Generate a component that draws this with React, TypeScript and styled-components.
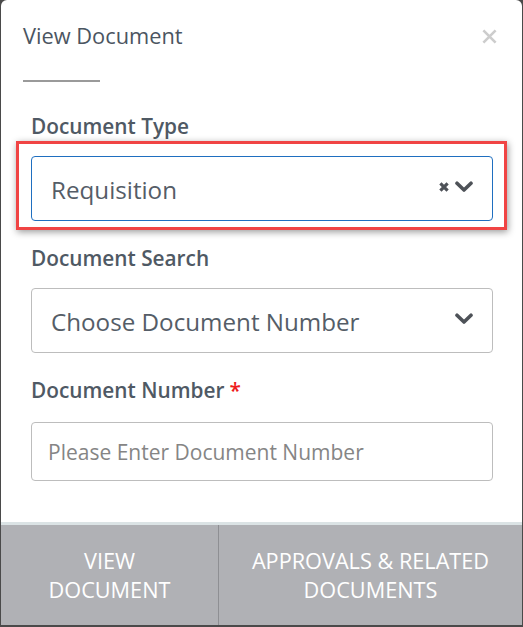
import React from "react";
import styled, { createGlobalStyle } from "styled-components";

const Global = createGlobalStyle`
  html, body { margin: 0; padding: 0; background: #4a4a4a; }
  body { font-family: "Open Sans", "Noto Sans", sans-serif; }
  * { box-sizing: border-box; }
`;

const Modal = styled.div`
  margin-left: 1px;
  width: 521px;
  height: 625px;
  background: #fff;
  border-radius: 6px 6px 0 0;
  display: flex;
  flex-direction: column;
  overflow: hidden;
`;

const Header = styled.div`
  display: flex;
  justify-content: space-between;
  align-items: flex-start;
  padding: 21px 24px 0 22px;
  height: 50px;
`;

const Title = styled.h2`
  margin: 0;
  font-size: 21.8px;
  line-height: 29px;
  font-weight: 400;
  color: #4b5561;
`;

const Close = styled.button`
  border: 0;
  background: none;
  padding: 0;
  margin-top: 7px;
  color: #cdcdcd;
  cursor: pointer;
  display: flex;
`;

const Rule = styled.div`
  margin: 30px 0 0 22px;
  width: 77px;
  height: 2px;
  background: #9a9a9a;
`;

const Body = styled.div`
  padding: 30px 29px 0 30px;
  display: flex;
  flex-direction: column;
  flex: 1;
`;

const Field = styled.div<{ $gap?: number }>`
  display: flex;
  flex-direction: column;
  margin-bottom: ${(p) => p.$gap ?? 0}px;
`;

const Label = styled.label<{ $space: number }>`
  font-size: 20.8px;
  line-height: 28px;
  font-weight: 600;
  color: #4f5964;
  margin-bottom: ${(p) => p.$space}px;
`;

const Req = styled.span`
  color: #ee1c1c;
  margin-left: 5px;
`;

const SelectWrap = styled.div`
  position: relative;
`;

const Select = styled.div<{ $active?: boolean }>`
  height: 65px;
  border: 1px solid ${(p) => (p.$active ? "#1f6fc0" : "#bdbdbd")};
  border-radius: 4px;
  display: flex;
  align-items: center;
  padding: 2px 19px 0 19px;
  font-size: 24.2px;
  color: #555d67;
  background: #fff;
`;

const SelectText = styled.span`
  flex: 1;
`;

const Icons = styled.span`
  display: flex;
  align-items: center;
  gap: 6px;
  color: #4e5258;
  margin-top: -5px;
`;

const Input = styled.input`
  height: 59px;
  border: 1px solid #bdbdbd;
  border-radius: 4px;
  padding: 0 16px;
  font-family: inherit;
  font-size: 21px;
  color: #444;
  outline: none;
  &::placeholder { color: #858585; }
`;

const Highlight = styled.div`
  position: absolute;
  left: -15px;
  right: -14px;
  top: -15px;
  bottom: -9px;
  border: 3px solid #f04444;
  box-shadow: 1px 2px 7px rgba(0, 0, 0, 0.4);
  pointer-events: none;
`;

const Footer = styled.div`
  border-top: 3px solid #dbe3e5;
  display: grid;
  grid-template-columns: 217px 1fr;
  height: 103px;
  background: #b0b1b5;
`;

const FooterButton = styled.button<{ $divider?: boolean }>`
  border: 0;
  border-left: ${(p) => (p.$divider ? "1px solid #8e8f93" : "0")};
  background: #b0b1b5;
  color: #fff;
  font-family: inherit;
  font-size: 21.7px;
  line-height: 29px;
  text-transform: uppercase;
  padding: 0 4px;
  cursor: pointer;
`;

const Cross = ({ size, stroke }: { size: number; stroke: number }) => (
  <svg width={size} height={size} viewBox="0 0 10 10">
    <path d="M1.4 1.4 L8.6 8.6 M8.6 1.4 L1.4 8.6" stroke="currentColor" strokeWidth={stroke} fill="none" />
  </svg>
);

const Chevron = () => (
  <svg width="18" height="12" viewBox="0 0 18 12">
    <path d="M2 2.2 L9 9 L16 2.2" stroke="currentColor" strokeWidth="3.6" fill="none" strokeLinecap="round" strokeLinejoin="round" />
  </svg>
);

export default function App() {
  return (
    <>
      <Global />
      <Modal>
        <Header>
          <Title>View Document</Title>
          <Close aria-label="close">
            <Cross size={17} stroke={1.55} />
          </Close>
        </Header>
        <Rule />
        <Body>
          <Field $gap={23}>
            <Label $space={16}>Document Type</Label>
            <SelectWrap>
              <Select $active>
                <SelectText>Requisition</SelectText>
                <Icons>
                  <Cross size={10} stroke={3.2} />
                  <Chevron />
                </Icons>
              </Select>
              <Highlight />
            </SelectWrap>
          </Field>
          <Field $gap={23}>
            <Label $space={16}>Document Search</Label>
            <Select>
              <SelectText>Choose Document Number</SelectText>
              <Icons>
                <Chevron />
              </Icons>
            </Select>
          </Field>
          <Field>
            <Label $space={18}>
              Document Number<Req>*</Req>
            </Label>
            <Input placeholder="Please Enter Document Number" />
          </Field>
        </Body>
        <Footer>
          <FooterButton>View<br />Document</FooterButton>
          <FooterButton $divider>Approvals &amp; Related<br />Documents</FooterButton>
        </Footer>
      </Modal>
    </>
  );
}
